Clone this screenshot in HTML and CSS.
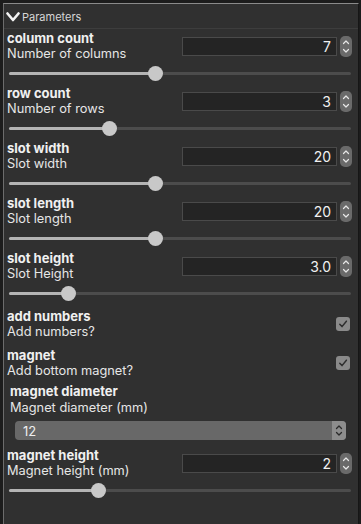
FILE: index.html
```html
<!DOCTYPE html>
<html lang="en">
<head>
  <meta charset="UTF-8">
  <meta name="viewport" content="width=device-width, initial-scale=1.0">
  <title>Parameters</title>
  <link rel="stylesheet" href="styles.css">
</head>
<body>

  <div class="panel">
    <div class="panel-head">
      <svg class="chevron" width="14" height="10" viewBox="0 0 14 10"><path d="M1.5 1.5 L7 8 L12.5 1.5" fill="none" stroke="#f2f2f2" stroke-width="2.6" stroke-linecap="round" stroke-linejoin="round"/></svg>
      <span>Parameters</span>
    </div>

    <!-- column count -->
    <div class="param">
      <div class="param-top">
        <div class="labels">
          <div class="name">column count</div>
          <div class="desc">Number of columns</div>
        </div>
        <div class="spin">
          <div class="num">7</div>
          <div class="stepper"><svg width="12" height="21" viewBox="0 0 12 21"><path d="M3.5 7.5 L6 5 L8.5 7.5 M3.5 13.5 L6 16 L8.5 13.5" fill="none" stroke="#e8e8e8" stroke-width="1.2" stroke-linecap="round" stroke-linejoin="round"/></svg></div>
        </div>
      </div>
      <div class="slider"><div class="track"><div class="fill" style="width:42.7%"></div><div class="thumb" style="left:42.7%"></div></div></div>
    </div>

    <!-- row count -->
    <div class="param">
      <div class="param-top">
        <div class="labels">
          <div class="name">row count</div>
          <div class="desc">Number of rows</div>
        </div>
        <div class="spin">
          <div class="num">3</div>
          <div class="stepper"><svg width="12" height="21" viewBox="0 0 12 21"><path d="M3.5 7.5 L6 5 L8.5 7.5 M3.5 13.5 L6 16 L8.5 13.5" fill="none" stroke="#e8e8e8" stroke-width="1.2" stroke-linecap="round" stroke-linejoin="round"/></svg></div>
        </div>
      </div>
      <div class="slider"><div class="track"><div class="fill" style="width:29.2%"></div><div class="thumb" style="left:29.2%"></div></div></div>
    </div>

    <!-- slot width -->
    <div class="param">
      <div class="param-top">
        <div class="labels">
          <div class="name">slot width</div>
          <div class="desc">Slot width</div>
        </div>
        <div class="spin">
          <div class="num">20</div>
          <div class="stepper"><svg width="12" height="21" viewBox="0 0 12 21"><path d="M3.5 7.5 L6 5 L8.5 7.5 M3.5 13.5 L6 16 L8.5 13.5" fill="none" stroke="#e8e8e8" stroke-width="1.2" stroke-linecap="round" stroke-linejoin="round"/></svg></div>
        </div>
      </div>
      <div class="slider"><div class="track"><div class="fill" style="width:42.7%"></div><div class="thumb" style="left:42.7%"></div></div></div>
    </div>

    <!-- slot length -->
    <div class="param">
      <div class="param-top">
        <div class="labels">
          <div class="name">slot length</div>
          <div class="desc">Slot length</div>
        </div>
        <div class="spin">
          <div class="num">20</div>
          <div class="stepper"><svg width="12" height="21" viewBox="0 0 12 21"><path d="M3.5 7.5 L6 5 L8.5 7.5 M3.5 13.5 L6 16 L8.5 13.5" fill="none" stroke="#e8e8e8" stroke-width="1.2" stroke-linecap="round" stroke-linejoin="round"/></svg></div>
        </div>
      </div>
      <div class="slider"><div class="track"><div class="fill" style="width:42.7%"></div><div class="thumb" style="left:42.7%"></div></div></div>
    </div>

    <!-- slot height -->
    <div class="param">
      <div class="param-top">
        <div class="labels">
          <div class="name">slot height</div>
          <div class="desc">Slot Height</div>
        </div>
        <div class="spin">
          <div class="num">3.0</div>
          <div class="stepper"><svg width="12" height="21" viewBox="0 0 12 21"><path d="M3.5 7.5 L6 5 L8.5 7.5 M3.5 13.5 L6 16 L8.5 13.5" fill="none" stroke="#e8e8e8" stroke-width="1.2" stroke-linecap="round" stroke-linejoin="round"/></svg></div>
        </div>
      </div>
      <div class="slider"><div class="track"><div class="fill" style="width:17.3%"></div><div class="thumb" style="left:17.3%"></div></div></div>
    </div>

    <!-- add numbers -->
    <div class="check-row">
      <div class="labels">
        <div class="name">add numbers</div>
        <div class="desc">Add numbers?</div>
      </div>
      <div class="checkbox"><svg width="14" height="14" viewBox="0 0 14 14"><path d="M3.8 7.2 L6 9.6 L10.4 4.2" fill="none" stroke="#2e2e2e" stroke-width="1.5" stroke-linecap="round" stroke-linejoin="round"/></svg></div>
    </div>

    <!-- magnet -->
    <div class="check-row">
      <div class="labels">
        <div class="name">magnet</div>
        <div class="desc">Add bottom magnet?</div>
      </div>
      <div class="checkbox"><svg width="14" height="14" viewBox="0 0 14 14"><path d="M3.8 7.2 L6 9.6 L10.4 4.2" fill="none" stroke="#2e2e2e" stroke-width="1.5" stroke-linecap="round" stroke-linejoin="round"/></svg></div>
    </div>

    <!-- magnet diameter -->
    <div class="choice">
      <div class="name">magnet diameter</div>
      <div class="desc">Magnet diameter (mm)</div>
      <div class="select">
        <span class="select-value">12</span>
        <div class="select-arrows"><svg width="14" height="19" viewBox="0 0 14 19"><path d="M4.5 7.5 L7 5 L9.5 7.5 M4.5 11.5 L7 14 L9.5 11.5" fill="none" stroke="#2a2a2a" stroke-width="1.3" stroke-linecap="round" stroke-linejoin="round"/></svg></div>
      </div>
    </div>

    <!-- magnet height -->
    <div class="param">
      <div class="param-top">
        <div class="labels">
          <div class="name">magnet height</div>
          <div class="desc">Magnet height (mm)</div>
        </div>
        <div class="spin">
          <div class="num">2</div>
          <div class="stepper"><svg width="12" height="21" viewBox="0 0 12 21"><path d="M3.5 7.5 L6 5 L8.5 7.5 M3.5 13.5 L6 16 L8.5 13.5" fill="none" stroke="#e8e8e8" stroke-width="1.2" stroke-linecap="round" stroke-linejoin="round"/></svg></div>
        </div>
      </div>
      <div class="slider"><div class="track"><div class="fill" style="width:26%"></div><div class="thumb" style="left:26%"></div></div></div>
    </div>
  </div>

</body>
</html>
```

FILE: styles.css
```css
:root {
  --panel-color: #303030;
  --text-color: #f0f0f0;
  --input-color: #242424;
  --input-border: #4a4a4a;
  --stepper-color: #6a6a6a;
}

html, body {
  height: 100%;
}

body {
  margin: 0;
  background: #1c1c1c;
  font-family: Inter, "Liberation Sans", Arial, sans-serif;
  color: var(--text-color);
}

.panel {
  box-sizing: border-box;
  width: 356px;
  height: 521px;
  margin: 3px 0 0 3px;
  background: var(--panel-color);
  border-top: 1px solid #8a8a8a;
  border-left: 1px solid #6c6c6c;
  border-right: 1px solid #161616;
  padding: 0 6px 0 3px;
}

.panel-head {
  display: flex;
  align-items: center;
  height: 24px;
  margin: 0 -6px 0 -3px;
  padding-left: 2px;
  border-bottom: 1px solid #3d3d3d;
  font-size: 11px;
  color: #d6d6d6;
}

.chevron {
  margin: 2px 2px 0 0;
}

.panel-head span {
  padding-top: 2px;
}

.name {
  font-weight: bold;
  font-size: 13px;
  line-height: 16px;
}

.desc {
  font-size: 12.8px;
  line-height: 16px;
  color: #e6e6e6;
}

/* numeric params */
.param {
  padding-top: 1px;
}

.param-top {
  display: flex;
  align-items: center;
  justify-content: space-between;
  height: 32px;
}

.spin {
  display: flex;
  align-items: center;
  gap: 3px;
}

.num {
  box-sizing: border-box;
  width: 155px;
  height: 19px;
  background: var(--input-color);
  border: 1px solid var(--input-border);
  font-size: 14px;
  line-height: 17px;
  text-align: right;
  padding-right: 5px;
}

.stepper {
  width: 12px;
  height: 21px;
  border-radius: 5px;
  background: var(--stepper-color);
  display: flex;
}

.slider {
  height: 22px;
  display: flex;
  align-items: center;
  padding: 0 1px 0 2px;
}

.track {
  position: relative;
  flex: 1;
  height: 3px;
  border-radius: 2px;
  background: #4c4c4c;
}

.fill {
  height: 100%;
  border-radius: 2px;
  background: #b4b4b4;
}

.thumb {
  position: absolute;
  top: -6px;
  width: 15px;
  height: 15px;
  margin-left: -7px;
  border-radius: 50%;
  background: #c8c8c8;
}

/* checkboxes */
.check-row {
  display: flex;
  align-items: center;
  justify-content: space-between;
  padding: 4px 2px 3px 0;
}

.checkbox {
  width: 14px;
  height: 14px;
  border-radius: 3px;
  background: #8a8a8a;
  display: flex;
}

/* select */
.choice {
  padding: 1px 0 6px 3px;
}

.choice .desc {
  line-height: 17px;
}

.select {
  display: flex;
  align-items: center;
  justify-content: space-between;
  height: 19px;
  margin: 5px 6px 0 5px;
  border-radius: 4px;
  background: #686868;
  overflow: hidden;
}

.select-value {
  font-size: 13px;
  padding-left: 8px;
  color: #efefef;
}

.select-arrows {
  width: 14px;
  height: 19px;
  background: #8d8d8d;
  display: flex;
}
```
